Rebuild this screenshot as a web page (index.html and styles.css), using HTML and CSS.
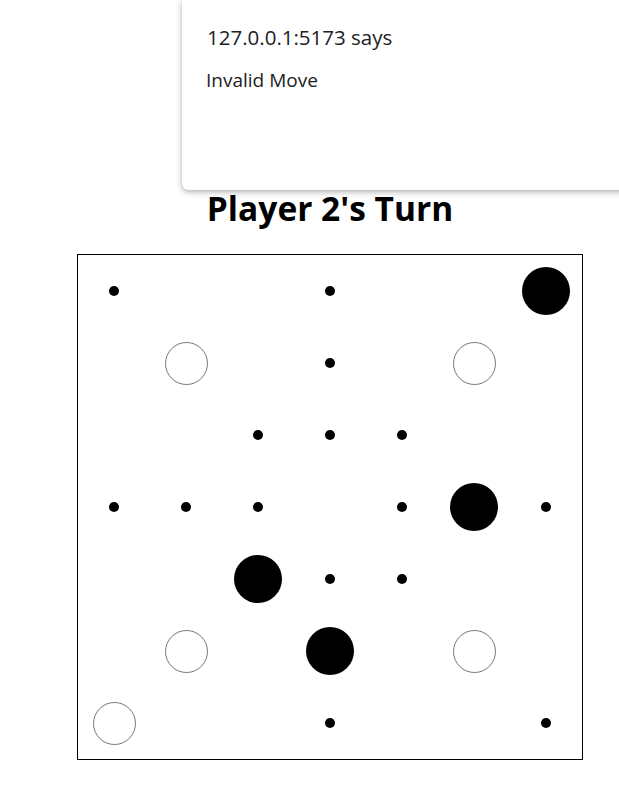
FILE: index.html
```html
<!DOCTYPE html>
<html lang="en">
<head>
    <meta charset="UTF-8">
    <meta name="viewport" content="width=device-width, initial-scale=1.0">
    <title>Nine Men's Morris</title>
    <link rel="stylesheet" href="styles.css">
</head>
<body>
    <div class="game">
        <h1 class="turn">Player 2's Turn</h1>
        <div class="board">
            <!-- row 0 -->
            <div class="cell"><span class="dot"></span></div>
            <div class="cell"></div>
            <div class="cell"></div>
            <div class="cell"><span class="dot"></span></div>
            <div class="cell"></div>
            <div class="cell"></div>
            <div class="cell"><span class="piece black"></span></div>
            <!-- row 1 -->
            <div class="cell"></div>
            <div class="cell"><span class="piece white"></span></div>
            <div class="cell"></div>
            <div class="cell"><span class="dot"></span></div>
            <div class="cell"></div>
            <div class="cell"><span class="piece white"></span></div>
            <div class="cell"></div>
            <!-- row 2 -->
            <div class="cell"></div>
            <div class="cell"></div>
            <div class="cell"><span class="dot"></span></div>
            <div class="cell"><span class="dot"></span></div>
            <div class="cell"><span class="dot"></span></div>
            <div class="cell"></div>
            <div class="cell"></div>
            <!-- row 3 -->
            <div class="cell"><span class="dot"></span></div>
            <div class="cell"><span class="dot"></span></div>
            <div class="cell"><span class="dot"></span></div>
            <div class="cell"></div>
            <div class="cell"><span class="dot"></span></div>
            <div class="cell"><span class="piece black"></span></div>
            <div class="cell"><span class="dot"></span></div>
            <!-- row 4 -->
            <div class="cell"></div>
            <div class="cell"></div>
            <div class="cell"><span class="piece black"></span></div>
            <div class="cell"><span class="dot"></span></div>
            <div class="cell"><span class="dot"></span></div>
            <div class="cell"></div>
            <div class="cell"></div>
            <!-- row 5 -->
            <div class="cell"></div>
            <div class="cell"><span class="piece white"></span></div>
            <div class="cell"></div>
            <div class="cell"><span class="piece black"></span></div>
            <div class="cell"></div>
            <div class="cell"><span class="piece white"></span></div>
            <div class="cell"></div>
            <!-- row 6 -->
            <div class="cell"><span class="piece white"></span></div>
            <div class="cell"></div>
            <div class="cell"></div>
            <div class="cell"><span class="dot"></span></div>
            <div class="cell"></div>
            <div class="cell"></div>
            <div class="cell"><span class="dot"></span></div>
        </div>
    </div>

    <!-- browser alert -->
    <div class="alert">
        <div class="alert-title">127.0.0.1:5173 says</div>
        <div class="alert-msg">Invalid Move</div>
    </div>
</body>
</html>
```

FILE: styles.css
```css
body{
    margin: 0;
    background: #fff;
    font-family: "Open Sans", "Noto Sans", sans-serif;
    color: #000;
}
.game{
    width: 506px;
    margin-left: 77px;
    padding-top: 186px;
}
.turn{
    margin: 0 0 24px 0;
    height: 44px;
    line-height: 44px;
    font-size: 33.5px;
    font-weight: 700;
    text-align: center;
}
.board{
    display: grid;
    grid-template-columns: repeat(7, 72px);
    grid-template-rows: repeat(7, 72px);
    border: 1px solid #000;
}
.cell{
    display: flex;
    justify-content: center;
    align-items: center;
}
.dot{
    width: 10px;
    height: 10px;
    border-radius: 50%;
    background: #000;
}
.piece{
    border-radius: 50%;
    box-sizing: border-box;
}
.piece.black{
    width: 48px;
    height: 48px;
    background: #000;
}
.piece.white{
    width: 43px;
    height: 43px;
    background: #fff;
    border: 1px solid #777;
}

.alert{
    position: absolute;
    top: 0;
    left: 182px;
    width: 448px;
    height: 190px;
    box-sizing: border-box;
    padding: 23px 24px;
    background: #fff;
    border-radius: 0 0 6px 6px;
    box-shadow: 0 2px 6px rgba(0,0,0,0.3), 0 0 1px rgba(0,0,0,0.25);
    color: #202124;
}
.alert-title{
    font-size: 20.5px;
    line-height: 28px;
    margin-left: 1px;
}
.alert-msg{
    margin-top: 16px;
    font-size: 19px;
    line-height: 26px;
}
```
